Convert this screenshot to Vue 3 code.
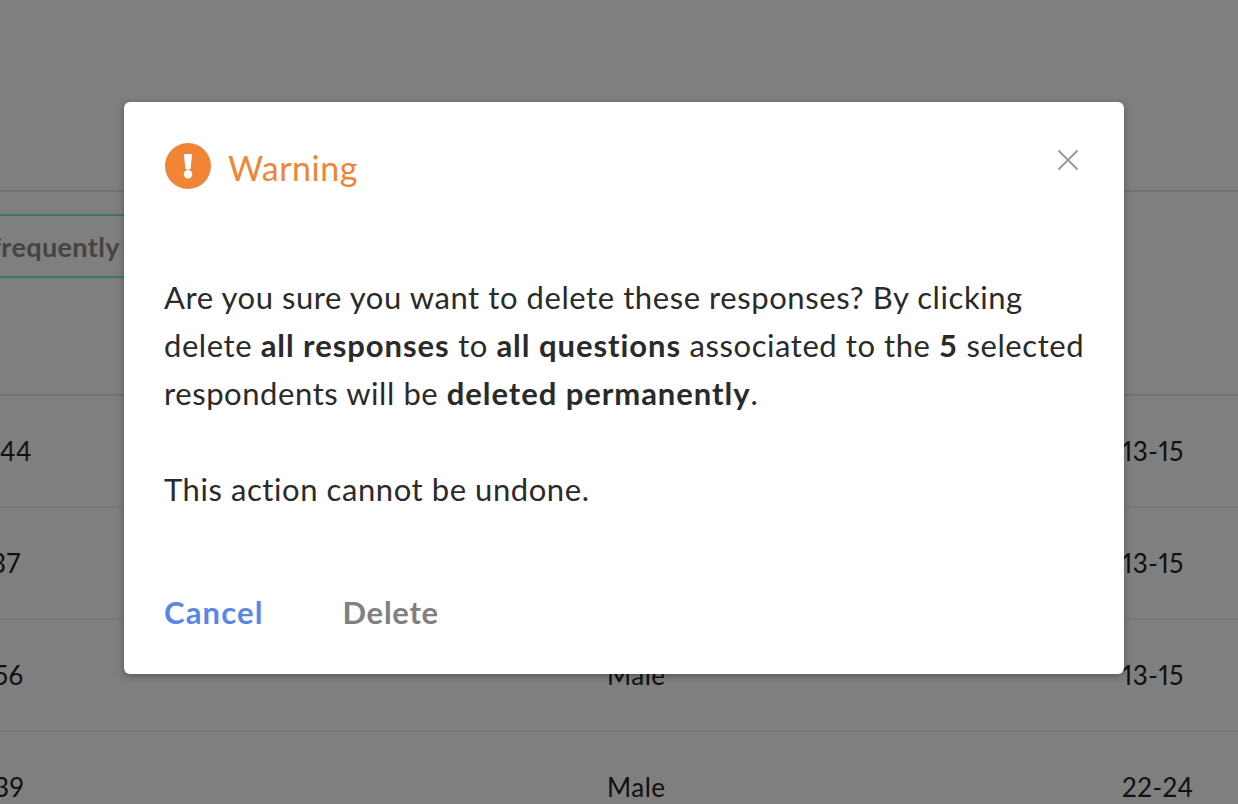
<template>
  <div class="page">
    <div class="top-bar"></div>
    <div class="filter-bar">
      <div class="chip">frequently</div>
    </div>
    <div v-for="row in rows" :key="row.id" class="row">
      <span :style="{ marginLeft: row.shift + 'px' }">{{ row.id }}</span>
      <span>{{ row.gender }}</span>
      <span>{{ row.age }}</span>
    </div>

    <div class="overlay">
      <div class="modal">
        <div class="modal-head">
          <svg class="warn-icon" width="46" height="46" viewBox="0 0 46 46">
            <circle cx="23" cy="23" r="23" fill="#f18436" />
            <path d="M19.5 11.5h7l-1.4 14.5h-4.2z" fill="#fff" stroke="#fff" stroke-width="1" stroke-linejoin="round" />
            <circle cx="23" cy="31.2" r="4.2" fill="#fff" />
          </svg>
          <h2 class="modal-title">Warning</h2>
          <button class="close-btn" aria-label="Close">
            <svg width="22" height="22" viewBox="0 0 22 22" fill="none" stroke="#999" stroke-width="2">
              <line x1="1.5" y1="1.5" x2="20.5" y2="20.5" />
              <line x1="20.5" y1="1.5" x2="1.5" y2="20.5" />
            </svg>
          </button>
        </div>
        <div class="modal-body">
          <p>Are you sure you want to delete these responses? By clicking delete <b>all responses</b> to <b>all questions</b> associated to the <b>5</b> selected respondents will be <b>deleted permanently</b>.</p>
          <p>This action cannot be undone.</p>
        </div>
        <div class="modal-actions">
          <button class="action cancel">Cancel</button>
          <button class="action delete">Delete</button>
        </div>
      </div>
    </div>
  </div>
</template>

<script setup>
// shift: the first column is cut off by the left edge of the window
const rows = [
  { id: '44', shift: 0, gender: 'Male', age: '13-15' },
  { id: '37', shift: -9, gender: 'Male', age: '13-15' },
  { id: '56', shift: -6, gender: 'Male', age: '13-15' },
  { id: '39', shift: -6, gender: 'Male', age: '22-24' }
];
</script>

<style>
html,
body {
  margin: 0;
  overflow: hidden;
  background: #fff;
}
</style>

<style scoped>
.page {
  position: relative;
  width: 1238px;
  height: 804px;
  overflow: hidden;
  background: #fff;
  font-family: Lato, "Noto Sans", sans-serif;
  color: #2a2a2a;
}

.top-bar {
  height: 192px;
  border-bottom: 2px solid #e6e6e6;
  box-sizing: border-box;
}

.filter-bar {
  height: 204px;
  padding-top: 22px;
  box-sizing: border-box;
  border-bottom: 2px solid #e6e6e6;
}

.chip {
  display: flex;
  align-items: center;
  justify-content: flex-end;
  width: 130px;
  height: 64px;
  padding-right: 10px;
  box-sizing: border-box;
  border-top: 2px solid #78f0c0;
  border-bottom: 2px solid #78f0c0;
  font-size: 27px;
  font-weight: 700;
  letter-spacing: 0.4px;
  color: #888;
  overflow: hidden;
}

.row {
  display: grid;
  grid-template-columns: 607px 515px 1fr;
  height: 112px;
  box-sizing: border-box;
  align-items: center;
  border-bottom: 2px solid #f0f0f0;
  font-size: 26px;
  letter-spacing: 0.5px;
  font-variant-numeric: proportional-nums;
  color: #222;
}

.overlay {
  position: absolute;
  inset: 0;
  display: flex;
  justify-content: center;
  align-items: flex-start;
  padding: 102px 0 0 10px;
  box-sizing: border-box;
  background: rgba(0, 0, 0, 0.5);
}

.modal {
  flex: none;
  width: 1000px;
  height: 572px;
  box-sizing: border-box;
  padding: 41px 40px 0;
  background: #fff;
  border-radius: 6px;
  box-shadow: 0 2px 8px rgba(0, 0, 0, 0.3);
}

.modal-head {
  display: flex;
  align-items: center;
  gap: 17px;
}

.warn-icon {
  margin-left: 1px;
}

.modal-title {
  margin: 0;
  padding-top: 2px;
  font-size: 34px;
  font-weight: 400;
  letter-spacing: 0.5px;
  color: #f18436;
}

.close-btn {
  display: flex;
  margin: -13px 5px 0 auto;
  padding: 0;
  border: 0;
  background: none;
}

.modal-body {
  margin: 84px -10px 0 0;
  font-size: 31px;
  line-height: 48px;
  letter-spacing: 0.57px;
  color: #2a2a2a;
}

.modal-body b {
  letter-spacing: 0.95px;
}

.modal-body p {
  margin: 0 0 48px;
}

.modal-actions {
  display: flex;
  gap: 79px;
  margin-top: 80px;
}

.action {
  padding: 0;
  border: 0;
  background: none;
  font-family: inherit;
  font-size: 31px;
  font-weight: 700;
}

.cancel {
  letter-spacing: 1.15px;
  color: #5b86e5;
}

.delete {
  letter-spacing: 0.7px;
  color: #808080;
}
</style>
